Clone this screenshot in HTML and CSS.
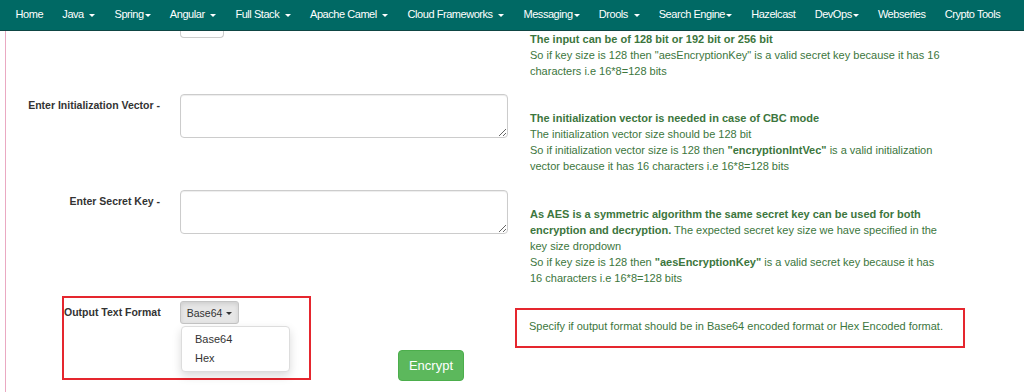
FILE: index.html
```html
<!DOCTYPE html>
<html lang="en">
<head>
    <meta charset="UTF-8">
    <meta name="viewport" content="width=device-width, initial-scale=1.0">
    <title>AES Encryption - Crypto Tools</title>
    <link rel="stylesheet" href="styles.css">
</head>
<body>
    <nav class="topnav">
        <a href="#">Home</a>
        <a href="#">Java <span class="caret"></span></a>
        <a href="#">Spring<span class="caret tight"></span></a>
        <a href="#">Angular <span class="caret"></span></a>
        <a href="#">Full Stack <span class="caret"></span></a>
        <a href="#">Apache Camel <span class="caret"></span></a>
        <a href="#">Cloud Frameworks <span class="caret"></span></a>
        <a href="#">Messaging<span class="caret tight"></span></a>
        <a href="#">Drools <span class="caret"></span></a>
        <a href="#">Search Engine<span class="caret tight"></span></a>
        <a href="#">Hazelcast</a>
        <a href="#">DevOps<span class="caret tight"></span></a>
        <a href="#">Webseries</a>
        <a href="#">Crypto Tools</a>
    </nav>

    <div class="content">
        <!-- key size row, scrolled mostly out of view -->
        <div class="form-row first">
            <div class="form-label"></div>
            <div class="form-input">
                <div class="select-stub"></div>
            </div>
            <div class="form-help flush">
                <strong>The input can be of 128 bit or 192 bit or 256 bit</strong><br>
                So if key size is 128 then "aesEncryptionKey" is a valid secret key because it has 16 characters i.e 16*8=128 bits
            </div>
        </div>

        <div class="form-row">
            <label class="form-label" for="iv">Enter Initialization Vector -</label>
            <div class="form-input">
                <textarea id="iv" class="text-box"></textarea>
            </div>
            <div class="form-help">
                <strong>The initialization vector is needed in case of CBC mode</strong><br>
                The initialization vector size should be 128 bit<br>
                So if initialization vector size is 128 then <strong>"encryptionIntVec"</strong> is a valid initialization vector because it has 16 characters i.e 16*8=128 bits
            </div>
        </div>

        <div class="form-row">
            <label class="form-label" for="secret">Enter Secret Key -</label>
            <div class="form-input">
                <textarea id="secret" class="text-box"></textarea>
            </div>
            <div class="form-help">
                <strong>As AES is a symmetric algorithm the same secret key can be used for both encryption and decryption.</strong> The expected secret key size we have specified in the key size dropdown<br>
                So if key size is 128 then <strong>"aesEncryptionKey"</strong> is a valid secret key because it has 16 characters i.e 16*8=128 bits
            </div>
        </div>

        <div class="output-row">
            <div class="highlight format-box">
                <span class="format-label">Output Text Format</span>
                <div class="dropdown">
                    <button class="dropdown-toggle">Base64 <span class="caret"></span></button>
                    <ul class="dropdown-menu">
                        <li>Base64</li>
                        <li>Hex</li>
                    </ul>
                </div>
            </div>
            <button class="btn-encrypt">Encrypt</button>
            <div class="highlight format-help">
                Specify if output format should be in Base64 encoded format or Hex Encoded format.
            </div>
        </div>
    </div>
</body>
</html>
```

FILE: styles.css
```css
body {
    margin: 0;
    padding: 0;
    font-family: "Liberation Sans", Arial, sans-serif;
    font-size: 11px;
    color: #333;
    background-color: #fff;
    height: 392px;
    overflow: hidden;
}
.topnav {
    display: flex;
    align-items: center;
    height: 30px;
    padding: 0 0 0 6px;
    background-color: #006964;
    border-bottom: 1px solid #0e4644;
}
.topnav a {
    color: #fff;
    text-decoration: none;
    font-size: 11px;
    letter-spacing: -0.45px;
    padding: 0 9.6px 2px;
    white-space: nowrap;
}
.caret {
    display: inline-block;
    width: 0;
    height: 0;
    margin-left: 3px;
    vertical-align: middle;
    border-top: 3px solid;
    border-left: 3px solid transparent;
    border-right: 3px solid transparent;
}
.caret.tight {
    margin-left: 1px;
}
.content {
    margin-left: 5px;
    border-left: 1px solid #eaa9c2;
    height: 361px;
}
.form-row {
    display: grid;
    grid-template-columns: 154px 328px 415px;
    column-gap: 20px;
    margin-top: 16px;
}
.form-row.first {
    margin-top: 0;
    margin-bottom: -1px;
}
.form-label {
    text-align: right;
    font-size: 10.5px;
    font-weight: bold;
    line-height: 16px;
    padding-top: 3px;
}
.form-help {
    margin-left: 2px;
    padding-top: 16px;
    line-height: 16px;
    color: #3c763d;
}
.form-help.flush {
    padding-top: 0;
}
.select-stub {
    width: 42px;
    height: 6px;
    border: 1px solid #ccc;
    border-top: none;
    border-radius: 0 0 4px 4px;
}
.text-box {
    display: block;
    box-sizing: border-box;
    width: 328px;
    height: 44px;
    margin: 0;
    border: 1px solid #ccc;
    border-radius: 4px;
    box-shadow: inset 0 1px 1px rgba(0, 0, 0, 0.075);
}
.output-row {
    display: flex;
    align-items: flex-start;
    margin-top: 10px;
}
.highlight {
    box-sizing: border-box;
    border: 2px solid #e5262e;
}
.format-box {
    display: flex;
    align-items: flex-start;
    width: 249px;
    height: 84px;
    margin-left: 56px;
}
.format-label {
    width: 116px;
    font-size: 10.5px;
    font-weight: bold;
    line-height: 16px;
    padding-top: 6px;
}
.dropdown {
    position: relative;
    margin-top: 3px;
}
.dropdown-toggle {
    width: 59px;
    height: 23px;
    padding: 0;
    font-family: "Liberation Sans", Arial, sans-serif;
    font-size: 10.5px;
    color: #333;
    background-color: #e6e6e6;
    border: 1px solid #c4c4c4;
    border-radius: 3px;
    box-shadow: inset 0 2px 4px rgba(0, 0, 0, 0.1);
}
.dropdown-toggle .caret {
    margin-left: 1px;
}
.dropdown-menu {
    position: absolute;
    top: 25px;
    left: 1px;
    width: 109px;
    box-sizing: border-box;
    margin: 0;
    padding: 3px 0;
    list-style: none;
    background-color: #fff;
    border: 1px solid #ddd;
    border-radius: 4px;
    box-shadow: 0 4px 10px rgba(0, 0, 0, 0.15);
}
.dropdown-menu li {
    padding: 0 13px;
    line-height: 19px;
    font-size: 11px;
    color: #333;
}
.btn-encrypt {
    width: 66px;
    height: 31px;
    margin: 54px 0 0 87px;
    padding: 0;
    font-family: "Liberation Sans", Arial, sans-serif;
    font-size: 13px;
    color: #fff;
    background-color: #5cb85c;
    border: 1px solid #4cae4c;
    border-radius: 4px;
}
.format-help {
    width: 450px;
    height: 40px;
    margin: 12px 0 0 51px;
    padding: 8px 12px 0;
    line-height: 16px;
    color: #3c763d;
}
```
